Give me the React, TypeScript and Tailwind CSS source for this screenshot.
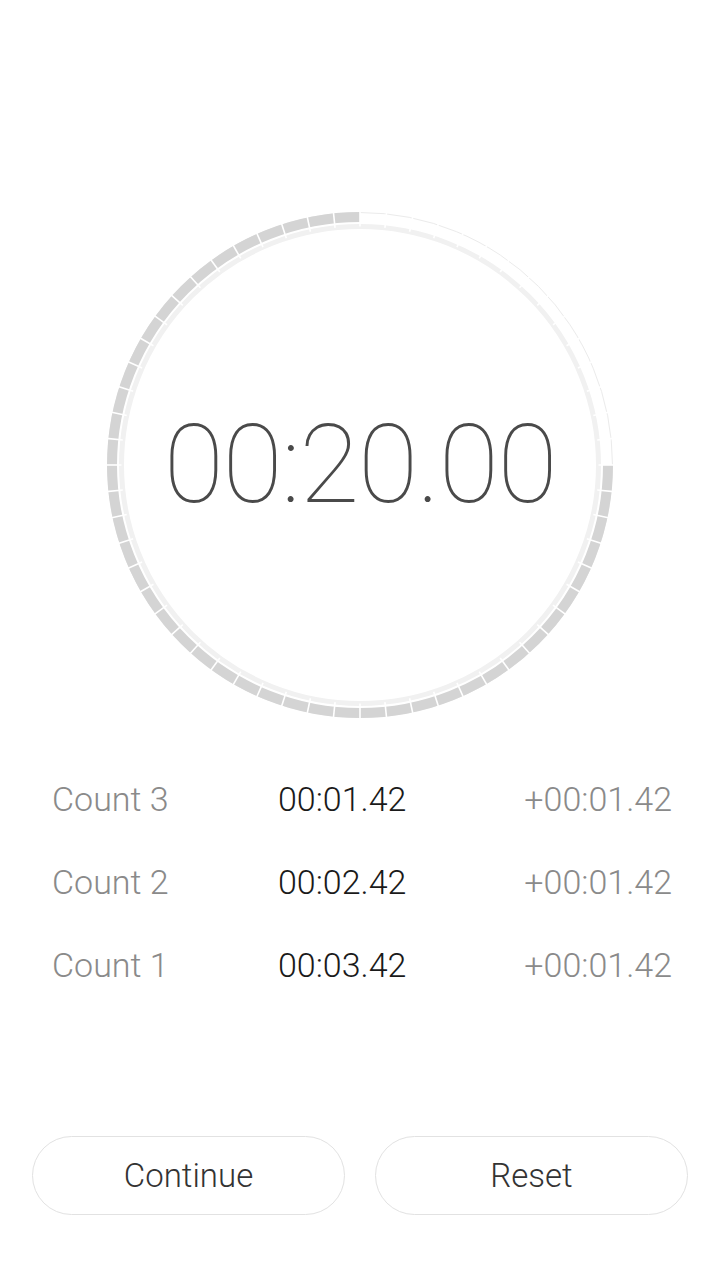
import React from "react";

const laps = [
  { label: "Count 3", time: "00:01.42", diff: "+00:01.42" },
  { label: "Count 2", time: "00:02.42", diff: "+00:01.42" },
  { label: "Count 1", time: "00:03.42", diff: "+00:01.42" },
];

function Dial() {
  const ticks = [];
  for (let i = 0; i < 60; i++) {
    const a = (i * 6 * Math.PI) / 180;
    const x1 = 256 + Math.sin(a) * 238.5;
    const y1 = 256 - Math.cos(a) * 238.5;
    const x2 = 256 + Math.sin(a) * 255;
    const y2 = 256 - Math.cos(a) * 255;
    ticks.push(<line key={i} x1={x1} y1={y1} x2={x2} y2={y2} stroke="#ffffff" strokeWidth={1.6} />);
  }
  return (
    <svg width={512} height={512} viewBox="0 0 512 512" className="absolute inset-0">
      <circle cx={256} cy={256} r={252.5} fill="none" stroke="#ebebeb" strokeWidth={1} />
      <path d="M 256 8 A 248 248 0 1 0 504 256" fill="none" stroke="#d4d4d4" strokeWidth={10} />
      <circle cx={256} cy={256} r={238.5} fill="none" stroke="#f1f1f1" strokeWidth={5} />
      {ticks}
    </svg>
  );
}

export default function App() {
  return (
    <div
      className="w-[720px] h-[1280px] bg-white flex flex-col"
      style={{ fontFamily: "Roboto, 'Noto Sans', sans-serif" }}
    >
      <div className="relative w-[512px] h-[512px] mx-auto mt-[209px] shrink-0">
        <Dial />
        <div className="absolute inset-0 flex items-center justify-center">
          <span className="text-[110px] font-thin text-[#4a4a4a] leading-none tracking-[-1.5px]">00:20.00</span>
        </div>
      </div>
      <div className="mt-[37px] pl-[52px] pr-[48px] flex flex-col">
        {laps.map((l) => (
          <div key={l.label} className="h-[83px] flex items-center text-[34px] font-light">
            <span className="w-[226px] text-[#8a8a8a]">{l.label}</span>
            <span className="flex-1 text-[#1a1a1a]">{l.time}</span>
            <span className="text-[#8a8a8a] text-right">{l.diff}</span>
          </div>
        ))}
      </div>
      <div className="mt-[129px] px-[32px] flex gap-[30px]">
        <button className="w-[313px] h-[79px] rounded-full border border-[#e2e2e2] text-[33px] font-light text-[#333333] flex items-center justify-center">
          Continue
        </button>
        <button className="w-[313px] h-[79px] rounded-full border border-[#e2e2e2] text-[33px] font-light text-[#333333] flex items-center justify-center">
          Reset
        </button>
      </div>
    </div>
  );
}
